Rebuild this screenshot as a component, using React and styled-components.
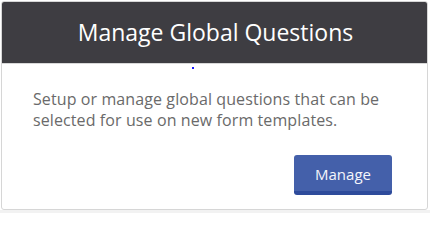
import React from "react";
import styled, { createGlobalStyle } from "styled-components";

const Global = createGlobalStyle`
  html, body { margin: 0; padding: 0; background: #ffffff; }
  body { font-family: "Open Sans", "Noto Sans", sans-serif; }
`;

const Page = styled.div`
  width: 430px;
  height: 213px;
  padding: 1px 3px 3px 1px;
  box-sizing: border-box;
  background: linear-gradient(to bottom, #fff 0, #fff 210px, #f2f2f2 210px);
`;

const Card = styled.div`
  width: 427px;
  height: 209px;
  box-sizing: border-box;
  border: 1px solid #d6d6d6;
  border-radius: 3px;
  background: #fff;
  display: flex;
  flex-direction: column;
  overflow: hidden;
`;

const Header = styled.div`
  height: 61px;
  background: #3e3d42;
  display: flex;
  align-items: center;
  justify-content: center;
  border-bottom: 1px solid #d8d8d8;
  flex-shrink: 0;
`;

const Title = styled.h2`
  margin: 0;
  color: #ffffff;
  font-size: 23px;
  font-weight: 400;
  line-height: 1;
  transform: translateX(1px);
`;

const Body = styled.div`
  position: relative;
  flex: 1;
  display: flex;
  flex-direction: column;
  padding: 25px 30px 0 31px;
`;

const Dot = styled.span`
  position: absolute;
  left: 190px;
  top: 3px;
  width: 2px;
  height: 2px;
  background: #1a1aff;
`;

const Text = styled.p`
  margin: 0;
  color: #6a6a6a;
  font-size: 16px;
  letter-spacing: 0.1px;
  line-height: 21px;
`;

const Actions = styled.div`
  display: flex;
  justify-content: flex-end;
  margin-top: 24px;
  padding-right: 5px;
`;

const Button = styled.button`
  width: 98px;
  height: 40px;
  border: none;
  border-bottom: 4px solid #2e4b9b;
  border-radius: 3px;
  background: #4460aa;
  color: #f4f6fb;
  font-family: "Open Sans", "Noto Sans", sans-serif;
  font-size: 15px;
  padding: 2px 0 0;
  cursor: pointer;
`;

export default function App() {
  return (
    <>
      <Global />
      <Page>
        <Card>
          <Header>
            <Title>Manage Global Questions</Title>
          </Header>
          <Body>
            <Dot />
            <Text>
              Setup or manage global questions that can be
              <br />
              selected for use on new form templates.
            </Text>
            <Actions>
              <Button>Manage</Button>
            </Actions>
          </Body>
        </Card>
      </Page>
    </>
  );
}
